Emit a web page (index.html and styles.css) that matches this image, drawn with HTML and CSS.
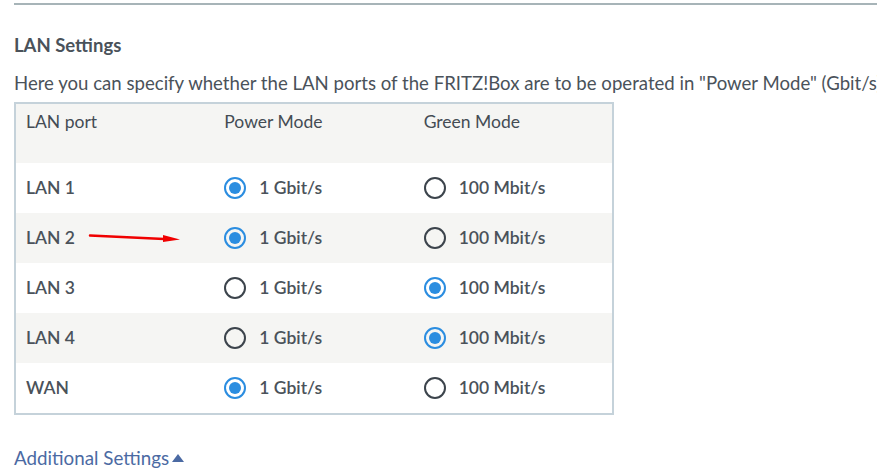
FILE: index.html
```html
<!DOCTYPE html>
<html lang="en">
<head>
    <meta charset="UTF-8">
    <meta name="viewport" content="width=device-width, initial-scale=1.0">
    <title>LAN Settings</title>
    <link rel="stylesheet" href="styles.css">
</head>
<body>
    <div class="page">
        <hr class="top-rule">
        <h2>LAN Settings</h2>
        <p class="intro">Here you can specify whether the LAN ports of the FRITZ!Box are to be operated in "Power Mode" (Gbit/s) or in "Green Mode" (100 Mbit/s).</p>
        <table class="ports">
            <thead>
                <tr>
                    <th>LAN port</th>
                    <th>Power Mode</th>
                    <th>Green Mode</th>
                </tr>
            </thead>
            <tbody>
                <tr>
                    <td>LAN 1</td>
                    <td><span class="radio on"></span>1 Gbit/s</td>
                    <td><span class="radio"></span>100 Mbit/s</td>
                </tr>
                <tr>
                    <td class="marked">LAN 2
                        <svg class="arrow" width="96" height="14" viewBox="0 0 96 14">
                            <path d="M2 4.5 L76 8" stroke="#f00000" stroke-width="2.5" stroke-linecap="round"/>
                            <path d="M75 4 L92 8.5 L75 11 Z" fill="#f00000"/>
                        </svg>
                    </td>
                    <td><span class="radio on"></span>1 Gbit/s</td>
                    <td><span class="radio"></span>100 Mbit/s</td>
                </tr>
                <tr>
                    <td>LAN 3</td>
                    <td><span class="radio"></span>1 Gbit/s</td>
                    <td><span class="radio on"></span>100 Mbit/s</td>
                </tr>
                <tr>
                    <td>LAN 4</td>
                    <td><span class="radio"></span>1 Gbit/s</td>
                    <td><span class="radio on"></span>100 Mbit/s</td>
                </tr>
                <tr>
                    <td>WAN</td>
                    <td><span class="radio on"></span>1 Gbit/s</td>
                    <td><span class="radio"></span>100 Mbit/s</td>
                </tr>
            </tbody>
        </table>
        <a class="more" href="#">Additional Settings<span class="caret"></span></a>
    </div>
</body>
</html>
```

FILE: styles.css
```css
body {
    margin: 0;
    padding: 0;
    font-family: Lato, "Open Sans", sans-serif;
    color: #4a525a;
    background: #fff;
    overflow: hidden;
}
.page {
    padding: 0 0 0 14px;
    width: 1200px;
}
.top-rule {
    margin: 3px 0 0 0;
    border: none;
    border-top: 2px solid #a7b4b8;
    width: 863px;
}
h2 {
    font-size: 18.5px;
    font-weight: bold;
    margin: 28px 0 0 0;
    line-height: 24px;
}
.intro {
    font-size: 18.6px;
    margin: 14px 0 0 0;
    line-height: 24px;
    white-space: nowrap;
}
.ports {
    border-collapse: collapse;
    border: 2px solid #c5d2da;
    width: 600px;
    margin-top: 7px;
    font-size: 17.5px;
}
.ports th {
    background: #f5f5f3;
    font-weight: normal;
    color: #444c54;
    text-align: left;
    vertical-align: top;
    height: 60px;
    box-sizing: border-box;
    padding: 7px 10px 0 10px;
    line-height: 22px;
    width: 200px;
}
.ports td {
    height: 50px;
    padding: 0 10px;
    vertical-align: middle;
    font-weight: 600;
    line-height: 22px;
}
.ports tbody tr:nth-child(even) td {
    background: #f5f5f3;
}
.radio {
    display: inline-block;
    vertical-align: middle;
    width: 22px;
    height: 22px;
    box-sizing: border-box;
    border: 2px solid #3c444c;
    border-radius: 50%;
    margin: -3px 13px 0 0;
    position: relative;
}
.radio.on {
    border-color: #2b8de0;
}
.radio.on::after {
    content: "";
    position: absolute;
    left: 3px;
    top: 3px;
    width: 12px;
    height: 12px;
    border-radius: 50%;
    background: #2b8de0;
}
.marked {
    position: relative;
}
.arrow {
    position: absolute;
    left: 72px;
    top: 18px;
}
.more {
    display: inline-block;
    margin-top: 31px;
    font-size: 18.8px;
    color: #4b6aa3;
    text-decoration: none;
}
.caret {
    display: inline-block;
    width: 0;
    height: 0;
    border-left: 6px solid transparent;
    border-right: 6px solid transparent;
    border-bottom: 8px solid #4b6aa3;
    margin-left: 3px;
    vertical-align: 3px;
}
```
